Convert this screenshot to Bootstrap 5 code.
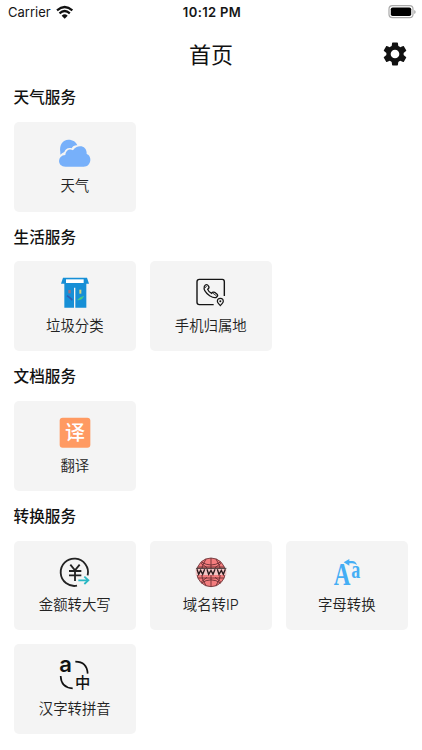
<!DOCTYPE html>
<html lang="zh-CN">
<head>
<meta charset="utf-8">
<meta name="viewport" content="width=device-width, initial-scale=1">
<title>首页</title>
<link href="https://cdn.jsdelivr.net/npm/bootstrap@5.3.0/dist/css/bootstrap.min.css" rel="stylesheet">
<style>
body{font-family:Inter,"Noto Sans CJK SC",sans-serif;color:#111;height:750px;overflow:hidden}
.status-bar{height:24px;padding:0 6px 0 8px;font-size:13px;line-height:24px;color:#151515}
.side{width:60px}
.clock{font-size:13px;letter-spacing:.35px}
.title-bar{height:60px;padding:0 14px}
.title-bar h1{font-size:22px;line-height:60px;font-weight:400;padding-top:1px}
.section-title{font-size:15.6px;line-height:24px;font-weight:500;padding-top:2px;height:37.9px;margin:0}
.service-section{padding:0 13.6px;height:139.6px}
.tiles{display:grid;grid-template-columns:repeat(3,122.4px);gap:13.7px 13.6px}
.tile{height:89.8px;background:#f4f4f4;border-radius:5px;padding-top:7px;color:#222}
.tile svg{width:50px;height:45px}
.tile span{font-size:14.4px;line-height:22px;margin-top:1.6px;font-weight:350}
</style>
<script src="https://cdn.jsdelivr.net/npm/bootstrap@5.3.0/dist/js/bootstrap.bundle.min.js"></script>
</head>
<body class="bg-white">
<header>
 <div class="status-bar d-flex justify-content-between align-items-center">
  <div class="side d-flex align-items-center"><span>Carrier</span>
   <svg class="ms-1 flex-shrink-0" width="19" height="14" viewBox="0 0 57 42" fill="none" stroke="#111" stroke-width="6.6"><path d="M6 16Q29-4 52 16M13.500 25Q29 11 44.500 25"/><path d="M20 32Q29 24 38 32L29 41Z" fill="#111" stroke="none"/></svg>
  </div>
  <span class="clock fw-semibold">10:12 PM</span>
  <div class="side d-flex justify-content-end"><svg width="28" height="14" viewBox="0 0 28 14"><rect x="1" y=".7" width="24" height="12" rx="3.4" fill="#fff" stroke="#aaa" stroke-width="1.2"/><rect x="2.8" y="2.5" width="20.4" height="8.5" rx="1.8" fill="#000"/><path d="M26.2 5v4q1.5-.5 1.5-2t-1.5-2" fill="#aaa"/></svg></div>
 </div>
 <div class="title-bar d-flex justify-content-between align-items-center">
  <span style="width:26px"></span><h1 class="m-0">首页</h1>
  <svg width="26" height="28" viewBox="1.2 .3 21.6 23.4" preserveAspectRatio="none" fill="#111"><path d="M19.14 12.94c.04-.3.06-.61.06-.94 0-.32-.02-.64-.07-.94l2.03-1.58a.49.49 0 0 0 .12-.61l-1.92-3.32a.488.488 0 0 0-.59-.22l-2.39.96c-.5-.38-1.03-.7-1.62-.94l-.36-2.54a.484.484 0 0 0-.48-.41h-3.84c-.24 0-.43.17-.47.41l-.36 2.54c-.59.24-1.13.57-1.62.94l-2.39-.96c-.22-.08-.47 0-.59.22L2.74 8.87c-.12.21-.08.47.12.61l2.03 1.58c-.05.3-.09.63-.09.94s.02.64.07.94l-2.03 1.58a.49.49 0 0 0-.12.61l1.92 3.32c.12.22.37.29.59.22l2.39-.96c.5.38 1.03.7 1.62.94l.36 2.54c.05.24.24.41.48.41h3.84c.24 0 .44-.17.47-.41l.36-2.54c.59-.24 1.13-.56 1.62-.94l2.39.96c.22.08.47 0 .59-.22l1.92-3.32c.12-.22.07-.47-.12-.61l-2.01-1.58zM12 15.6A3.6 3.6 0 1 1 12 8.4a3.6 3.6 0 0 1 0 7.2z"/></svg>
 </div>
</header>
<main>
 <section class="service-section">
  <h2 class="section-title">天气服务</h2>
  <div class="tiles">
   <div class="tile d-flex flex-column align-items-center">
    <svg viewBox="0 -3 150 135" fill="#77b0fa"><path d="M31 67C27 44 39 29 55 29c14 0 24 7 27 17-7-1-14 3-17 9-12-3-20 4-22 11-5 2-9 5-12 8Z"/><path d="M47 110C20 110 22 76 46 75c1-14 13-20 23-14 12-20 43-16 41 11 17 5 15 38-9 38Z"/></svg>
    <span>天气</span></div>
  </div>
 </section>
 <section class="service-section">
  <h2 class="section-title">生活服务</h2>
  <div class="tiles">
   <div class="tile d-flex flex-column align-items-center">
    <svg viewBox="0 1 150 135"><path d="M39 30h72l6 18h-8v72H76V60h-4v60H43V48H33Z" fill="#168fd6"/><path d="M48 35h53v11H48Z" fill="#fff"/><path d="M55 67h7v10h-7Z" fill="#a16d80"/><path d="M88 66h6v12h-6Z" fill="#d6d27c"/><path d="M51 84l8 6 8 7" fill="none" stroke="#315bb4" stroke-width="5"/><path d="M83 97l6-6 12-5-6 8Z" fill="#52d65c" stroke="#43c59c" stroke-width="2"/></svg>
    <span>垃圾分类</span></div>
   <div class="tile d-flex flex-column align-items-center">
    <svg viewBox="0 1 150 135" fill="none" stroke="#151515" stroke-width="4.2"><path d="M83 111H40q-7 0-7-7V42q0-7 7-7h69q6 0 6 7v43"/><path d="M55 56c4-7 9-7 13 0 3 5 0 7-3 9 2 6 6 9 12 12 3-5 8-4 13 0 7 4 6 8 2 11-5 5-13 1-21-4C60 76 52 65 55 56Z" stroke-width="3.8"/><path d="M80 76l12 9M56 62l6-7" stroke-width="2.5"/><path d="M103 114c-5-5-9-9-9-13a9 9 0 0 1 18 0c0 4-4 8-9 13Z" stroke-width="3.4"/><circle cx="103" cy="101" r="3" fill="#151515" stroke="none"/></svg>
    <span>手机归属地</span></div>
  </div>
 </section>
 <section class="service-section">
  <h2 class="section-title">文档服务</h2>
  <div class="tiles">
   <div class="tile d-flex flex-column align-items-center">
    <svg viewBox="0 0 150 135"><rect x="29" y="29" width="92" height="90" rx="9" fill="#ff9a62"/><text x="75" y="96" text-anchor="middle" font-size="60" font-weight="500" fill="#fff">译</text></svg>
    <span>翻译</span></div>
  </div>
 </section>
 <section>
  <div class="service-section">
  <h2 class="section-title">转换服务</h2>
  <div class="tiles">
   <div class="tile d-flex flex-column align-items-center">
    <svg viewBox="0 1 150 135" fill="none" stroke="#222" stroke-width="5.5"><path d="M81 114A41 41 0 1 1 113 83"/><path d="M61 51l14 17 14-17M75 68v32M57 70h37M57 83h37"/><path d="M85 98h30M103 87l12 11-12 11" stroke="#2bb8c4"/></svg>
    <span>金额转大写</span></div>
   <div class="tile d-flex flex-column align-items-center">
    <svg viewBox="0 1 150 135" fill="none" stroke="#642b30" stroke-width="2.6"><circle cx="75" cy="74" r="43" fill="#f47d7e" stroke="#683539"/><path d="M75 31v86M36 58h78M36 91h78M46 43q29 18 58 0M46 106q29-19 58 0M60 34q-28 40 0 80M90 34q28 40 0 80M45 47l18 13M105 47L87 60M46 102l17-13M104 102L87 89"/><path d="M29 62h92v20H29Z" fill="#f3c6c6" stroke="none"/><path d="M30 62h91" stroke="#222"/><path d="M33 65l5 15 6-12 6 12 6-15M63 65l5 15 7-12 6 12 6-15M94 65l5 15 7-12 6 12 6-15" stroke="#2a1a1c" stroke-width="4"/></svg>
    <span>域名转IP</span></div>
   <div class="tile d-flex flex-column align-items-center">
    <svg viewBox="0 1 150 135" fill="#45aef4" font-family="Liberation Serif,serif" font-weight="700"><text x="35" y="113" font-size="94" textLength="50" lengthAdjust="spacingAndGlyphs">A</text><text x="88" y="91" font-size="76" textLength="27" lengthAdjust="spacingAndGlyphs">a</text><path d="M65 44l17-10v6h9q10 0 14 12-7-5-14-5h-9v7Z"/></svg>
    <span>字母转换</span></div>
   <div class="tile d-flex flex-column align-items-center">
    <svg viewBox="0 3 150 135" fill="#111"><text x="28" y="67" font-size="66" font-weight="600" textLength="38" lengthAdjust="spacingAndGlyphs">a</text><path d="M76 35q35 0 37 36M32 78q1 35 36 37" fill="none" stroke="#111" stroke-width="5"/><text x="98" y="115" text-anchor="middle" font-size="46" font-weight="500">中</text></svg>
    <span>汉字转拼音</span></div>
  </div>
  </div>
 </section>
</main>
</body>
</html>
